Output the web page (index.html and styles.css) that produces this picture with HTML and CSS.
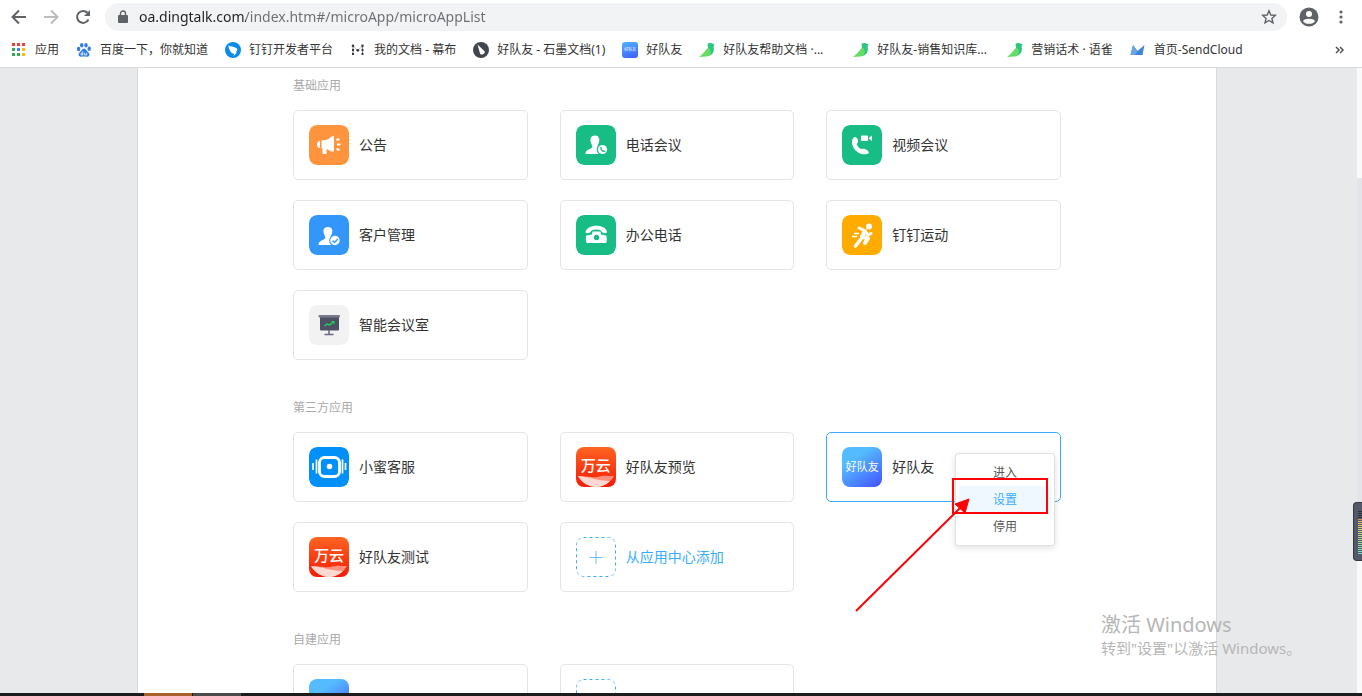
FILE: index.html
```
<!DOCTYPE html>
<html lang="zh-CN">
<head>
<meta charset="utf-8">
<title>应用管理</title>
<link rel="stylesheet" href="styles.css">
</head>
<body>
<header class="browser">
  <div class="toolbar">
    <button class="tool" aria-label="后退"><svg width="16" height="16" viewBox="0 0 16 16"><path d="M15 8H2M8 1.500L1.500 8L8 14.500" fill="none" stroke="#5f6368" stroke-width="2"/></svg></button>
    <button class="tool" aria-label="前进"><svg width="16" height="16" viewBox="0 0 16 16"><path d="M1 8H14M8 1.500L14.500 8L8 14.500" fill="none" stroke="#babcbe" stroke-width="2"/></svg></button>
    <button class="tool" aria-label="刷新"><svg width="16" height="16" viewBox="0 0 16 16"><path d="M13.500 10.500A6 6 0 1 1 12.500 3.800" fill="none" stroke="#5f6368" stroke-width="2"/><path d="M15 1V7H9Z" fill="#5f6368"/></svg></button>
    <div class="address">
      <svg width="12" height="14" viewBox="0 0 12 14"><rect x="1" y="5" width="10" height="8" rx="1" fill="#5f6368"/><path d="M3.500 6V3.500a2.500 2.500 0 0 1 5 0V6" fill="none" stroke="#5f6368" stroke-width="1.400"/></svg>
      <input class="url" type="text" aria-label="地址" value="oa.dingtalk.com/index.htm#/microApp/microAppList">
      <button class="tool" aria-label="收藏"><svg width="16" height="16" viewBox="0 0 16 16"><path d="M8 1.800L9.800 6L14.300 6.400L10.900 9.400L12 13.900L8 11.500L4 13.900L5.100 9.400L1.700 6.400L6.200 6Z" fill="none" stroke="#5f6368" stroke-width="1.400"/></svg></button>
    </div>
    <button class="tool" aria-label="用户"><svg width="20" height="20" viewBox="0 0 20 20"><circle cx="10" cy="10" r="9.500" fill="#5f6368"/><circle cx="10" cy="7" r="3" fill="#fff"/><path d="M4 14.200C5.500 11 14.500 11 16 14.200C14 17.600 6 17.600 4 14.200Z" fill="#fff"/></svg></button>
    <button class="tool more" aria-label="菜单"><svg width="4" height="16" viewBox="0 0 4 16" fill="#5f6368"><circle cx="2" cy="3" r="1.600"/><circle cx="2" cy="8" r="1.600"/><circle cx="2" cy="13" r="1.600"/></svg></button>
  </div>
  <nav class="bookmarks">
    <a href="#"><svg width="16" height="16" viewBox="0 0 16 16"><path d="M1 1h3v3H1zM6 1h3v3H6zM11 1h3v3h-3z" fill="#e8403a"/><path d="M1 6h3v3H1zM1 11h3v3H1z" fill="#34a853"/><path d="M6 6h3v3H6z" fill="#4285f4"/><path d="M11 6h3v3h-3zM11 11h3v3h-3z" fill="#fbbc05"/><path d="M6 11h3v3H6z" fill="#34a853"/></svg>应用</a>
    <a href="#"><svg width="16" height="16" viewBox="0 0 16 16" fill="#2f7de8"><ellipse cx="2.600" cy="7" rx="1.700" ry="2.200"/><ellipse cx="5.700" cy="3.300" rx="1.700" ry="2.200"/><ellipse cx="10" cy="3.300" rx="1.700" ry="2.200"/><ellipse cx="13.200" cy="6.800" rx="1.700" ry="2.200"/><path d="M8 6.500C10 6.500 10.500 9 12.500 10.500C14.500 12.500 13 15.200 10.500 14.800C8.500 14.400 7.500 14.400 5.500 14.800C2.500 15.200 1.800 12.300 3.500 10.600C5.500 9 6 6.500 8 6.500Z"/><path d="M6.800 9.500V13H5.200V11.200H6.500M8.600 10.800V13H10.700V10.800" fill="none" stroke="#fff" stroke-width=".8"/></svg>百度一下，你就知道</a>
    <a href="#"><svg width="16" height="16" viewBox="0 0 16 16"><circle cx="8" cy="8" r="8" fill="#0a8be8"/><path d="M3.500 3.500C6 4.500 10 5 12 6.500C13 7.500 11.500 9.500 10.700 10.500H12L8.500 14L9.200 11.500H8C6 11 5.500 9.800 5.300 9C4.300 7.500 3.500 5.500 3.500 3.500Z" fill="#fff"/></svg>钉钉开发者平台</a>
    <a href="#"><svg width="16" height="16" viewBox="0 0 16 16" fill="#33373d"><path d="M3 4L7.800 8.500L12.500 4" fill="none" stroke="#a0a3a7" stroke-width=".8"/><path d="M3 4V12M12.500 4V12" stroke="#777b80"/><circle cx="3" cy="3.800" r="1.300"/><circle cx="12.500" cy="3.800" r="1.300"/><circle cx="7.800" cy="8.300" r="1.400"/><path d="M2 7h2v2H2zM2 11h2v2H2zM11.500 7h2v2h-2zM11.500 11h2v2h-2z"/></svg>我的文档 - 幕布</a>
    <a href="#"><svg width="16" height="16" viewBox="0 0 16 16"><circle cx="8" cy="8" r="8" fill="#3f464e"/><path d="M4.500 2.500L11.800 9.500C12 12 9 13.500 7.200 12Z" fill="#fff"/></svg>好队友 - 石墨文档(1)</a>
    <a href="#"><span class="mini">好队友</span>好队友</a>
    <a href="#" class="long"><svg width="16" height="16" viewBox="0 0 16 16"><path d="M8.500 2C10.500 .5 12.500 1 15.500 2.500L14.500 4.500C16 10 13 13.500 8.500 14L9 6Z" fill="#2bc780"/><path d="M0 15C4.500 11.500 6.500 8 9.500 5.500C13 7.500 13 14.500 7 14.500Z" fill="#64dc66"/></svg>好队友帮助文档 ·...</a>
    <a href="#" class="long"><svg width="16" height="16" viewBox="0 0 16 16"><path d="M8.500 2C10.500 .5 12.500 1 15.500 2.500L14.500 4.500C16 10 13 13.500 8.500 14L9 6Z" fill="#2bc780"/><path d="M0 15C4.500 11.500 6.500 8 9.500 5.500C13 7.500 13 14.500 7 14.500Z" fill="#64dc66"/></svg>好队友-销售知识库...</a>
    <a href="#"><svg width="16" height="16" viewBox="0 0 16 16"><path d="M8.500 2C10.500 .5 12.500 1 15.500 2.500L14.500 4.500C16 10 13 13.500 8.500 14L9 6Z" fill="#2bc780"/><path d="M0 15C4.500 11.500 6.500 8 9.500 5.500C13 7.500 13 14.500 7 14.500Z" fill="#64dc66"/></svg>营销话术 · 语雀</a>
    <a href="#"><svg width="16" height="16" viewBox="0 0 16 16"><path d="M.5 13L3 3L7.500 9L14.500 3L12.500 13Z" fill="#3f86d8"/><path d="M3 3L7.500 9L5 13H.5Z" fill="#6aa5e6"/></svg>首页-SendCloud</a>
    <button class="tool overflow" aria-label="更多书签"><svg width="10" height="8" viewBox="0 0 10 8"><path d="M1 1L4 4L1 7M5 1L8 4L5 7" fill="none" stroke="#50545a" stroke-width="1.500"/></svg></button>
  </nav>
</header>

<div class="viewport">
  <main class="sheet">
    <section class="group">
      <h2>基础应用</h2>
      <ul class="cards">
        <li class="card"><a href="#"><svg class="icon" viewBox="0 0 40 40"><rect width="40" height="40" rx="8" fill="#ff943e"/><g fill="#fff"><path d="M11 16V23C7 23.500 7 15.500 11 16Z"/><path d="M12.500 15.500C17 15.500 20 14 22.500 11.500L25 11V26.500L22.500 26.500L17.500 24V29H13.500V23.500H12.500Z"/><path d="M27.500 15L30.500 14M28 19.500H31.500M27.500 24L30.500 25" stroke="#fff" stroke-width="2"/></g></svg>公告</a></li>
        <li class="card"><a href="#"><svg class="icon" viewBox="0 0 40 40"><rect width="40" height="40" rx="8" fill="#17bd84"/><path d="M19 10.500C23 10.500 24 14 23 17.500C22 20 21 21 22 22.500L26 24.500V29H9.500C9.500 25.500 12 25 15.500 23C17 22 16 20.500 15 18C13.500 14 15 10.500 19 10.500Z" fill="#fff"/><circle cx="26.500" cy="24.500" r="5.800" fill="#17bd84"/><circle cx="26.500" cy="24.500" r="4.600" fill="#fff"/><path d="M25 22C24.500 25 26.500 27 29 26" fill="none" stroke="#17bd84" stroke-width="1.400"/></svg>电话会议</a></li>
        <li class="card"><a href="#"><svg class="icon" viewBox="0 0 40 40"><rect width="40" height="40" rx="8" fill="#17bd84"/><path d="M12.500 12C15.500 11.500 17.500 17.500 15 18.500C14 20 18 24.500 20 24C22 23 27 25.500 27 28C22 32 9 27 10 15.500Q10.500 13 12.500 12Z" fill="#fff"/><rect x="19" y="10.500" width="7" height="5.500" rx="1" fill="#fff"/><path d="M26.500 13.200L30 10.500V16Z" fill="#fff"/></svg>视频会议</a></li>
        <li class="card"><a href="#"><svg class="icon" viewBox="0 0 40 40"><rect width="40" height="40" rx="8" fill="#3296fa"/><path d="M19 12C23 12 24 15 23 18.500C22 21 21 21.500 22 23L26 25V30H9.500C9.500 26.500 12 26 15.500 24C17 23 16 21.500 15 19C13.500 15 15 12 19 12Z" fill="#fff"/><circle cx="26" cy="25.500" r="5.800" fill="#3296fa"/><circle cx="26" cy="25.500" r="4.700" fill="#fff"/><path d="M23.500 25.500L25.500 27.500L28.800 24" fill="none" stroke="#3296fa" stroke-width="1.300"/></svg>客户管理</a></li>
        <li class="card"><a href="#"><svg class="icon" viewBox="0 0 40 40"><rect width="40" height="40" rx="8" fill="#17bd84"/><path d="M9.500 17.500C10 8.500 31 8.500 31 17.500C29 19 26 18 25 15.500C22 14.300 18 14.300 15.500 15.500C14.500 18 11.500 19 9.500 17.500Z" fill="#fff"/><path d="M16.500 16.500H24.500L25 19.500L30 20.500C31 21 31 27 30 28H11C9.500 27 9.500 21 10.500 20.500L16 19.500Z" fill="#fff"/><circle cx="20.500" cy="22.500" r="2.700" fill="#17bd84"/></svg>办公电话</a></li>
        <li class="card"><a href="#"><svg class="icon" viewBox="0 0 40 40"><rect width="40" height="40" rx="8" fill="#ffab00"/><circle cx="27" cy="11.500" r="3" fill="#fff"/><path d="M17 13L22.500 15.500L26 20L29 18.500" fill="none" stroke="#fff" stroke-width="3" stroke-linecap="round" stroke-linejoin="round"/><path d="M23 16L20 21.500L26 23.500L23 28" fill="none" stroke="#fff" stroke-width="4" stroke-linecap="round" stroke-linejoin="round"/><path d="M19 24L13.500 31" stroke="#fff" stroke-width="3.500" stroke-linecap="round"/><path d="M12 18.500H17M10 21.500H15" stroke="#fff" stroke-width="1.400"/></svg>钉钉运动</a></li>
        <li class="card"><a href="#"><svg class="icon" viewBox="0 0 40 40"><rect width="40" height="40" rx="8" fill="#f2f2f2"/><rect x="11" y="11" width="19" height="14.500" rx="1" fill="#4e5064"/><rect x="9.500" y="10" width="21.500" height="2.500" rx="1" fill="#797a8c"/><path d="M20 25V29M15.500 29.500H24.500" stroke="#6a6b80" stroke-width="1.600"/><path d="M15.500 21L18 19L20.500 20L23.500 17.500" fill="none" stroke="#1fd45e" stroke-width="1.500"/><path d="M22 16H25.500V19.500Z" fill="#1fd45e"/></svg>智能会议室</a></li>
      </ul>
    </section>

    <section class="group">
      <h2>第三方应用</h2>
      <ul class="cards">
        <li class="card"><a href="#"><svg class="icon" viewBox="0 0 40 40"><rect width="40" height="40" rx="8" fill="#0190fa"/><rect x="10.500" y="10.500" width="20" height="19" rx="5" fill="none" stroke="#fff" stroke-width="2.800"/><circle cx="20.500" cy="19.500" r="2.800" fill="#fff"/><path d="M7.500 12.500V26.500M4 16V23M33.500 12.500V26.500M36.500 16V23" stroke="#fff" stroke-width="1.700"/></svg>小蜜客服</a></li>
        <li class="card"><a href="#"><span class="icon wan"><span>万云</span><svg viewBox="0 0 40 12"><path d="M2 1C12 1 17 3 21 2C27 0 33 1 38 1C34 8 27 12 20 12C13 12 6 8 2 1Z" fill="#ff8f7c"/><path d="M2 1C14 2 23 6 34 6C30 10 25 12 20 12C13 12 6 8 2 1Z" fill="#ffd8d2"/></svg></span>好队友预览</a></li>
        <li class="card active"><a href="#"><span class="icon team">好队友</span>好队友</a>
          <div class="menu"><button>进入</button><button class="chosen">设置</button><button>停用</button></div>
          <svg class="marker" width="194" height="138" viewBox="0 0 194 138"><rect x="99" y="3" width="94" height="34" fill="none" stroke="#fb0307" stroke-width="2"/><path d="M2 135L106 32" stroke="#fb0307" stroke-width="2"/><path d="M115 23L101 28L111 37Z" fill="#fb0307" stroke="#fb0307"/></svg>
        </li>
        <li class="card"><a href="#"><span class="icon wan"><span>万云</span><svg viewBox="0 0 40 12"><path d="M2 1C12 1 17 3 21 2C27 0 33 1 38 1C34 8 27 12 20 12C13 12 6 8 2 1Z" fill="#ff8f7c"/><path d="M2 1C14 2 23 6 34 6C30 10 25 12 20 12C13 12 6 8 2 1Z" fill="#ffd8d2"/></svg></span>好队友测试</a></li>
        <li class="card add"><a href="#"><svg class="icon" viewBox="0 0 40 40"><rect x=".5" y=".5" width="39" height="39" rx="7" fill="none" stroke="#38adff" stroke-dasharray="3 3"/><path d="M13.500 20.500H26.500M20 14V27" stroke="#6fbdf8"/></svg>从应用中心添加</a></li>
      </ul>
    </section>

    <section class="group">
      <h2>自建应用</h2>
      <ul class="cards">
        <li class="card"><a href="#" aria-label="自建应用"><span class="icon team">好队友</span></a></li>
        <li class="card add"><a href="#" aria-label="添加应用"><svg class="icon" viewBox="0 0 40 40"><rect x=".5" y=".5" width="39" height="39" rx="7" fill="none" stroke="#38adff" stroke-dasharray="3 3"/><path d="M13.500 20.500H26.500M20 14V27" stroke="#6fbdf8"/></svg></a></li>
      </ul>
    </section>
  </main>
  <div class="track"><div class="thumb"></div></div>
  <div class="meter"><div class="levels"></div></div>
  <div class="watermark"><p class="big">激活 Windows</p><p>转到"设置"以激活 Windows。</p></div>
</div>
<footer class="taskbar"><span class="task hot"></span><span class="task"></span></footer>
</body>
</html>
```
FILE: styles.css
```
* { box-sizing: border-box; }
body {
  margin: 0;
  height: 100vh;
  display: flex;
  flex-direction: column;
  overflow: hidden;
  background: #fff;
  color: #333;
  font: 12px/20px "Noto Sans", "Noto Sans CJK SC", sans-serif;
}
h2, p, ul { margin: 0; padding: 0; font-weight: 400; }
ul { list-style: none; }
a { color: inherit; text-decoration: none; }
button { border: 0; padding: 0; background: none; font: inherit; color: inherit; cursor: pointer; }

.browser { flex: none; border-bottom: 1px solid #d9dadc; }
.toolbar { display: flex; align-items: center; gap: 16px; height: 34px; padding: 0 19px 0 11px; }
.tool { display: flex; flex: none; }
.address {
  flex: 1;
  display: flex;
  align-items: center;
  gap: 10px;
  height: 28px;
  margin-right: -4px;
  margin-left: -2px;
  padding: 0 10px 0 12px;
  border-radius: 14px;
  background: #f1f3f4;
}
.url {
  flex: 1;
  min-width: 0;
  border: 0;
  padding: 0;
  font: 14px/20px "Noto Sans", sans-serif;
  color: #6b6e72;
  background: linear-gradient(90deg, #202124 107px, #6b6e72 107px);
  -webkit-background-clip: text;
  background-clip: text;
  -webkit-text-fill-color: transparent;
}
.more { margin-left: 4px; }
.bookmarks { display: flex; align-items: center; gap: 17px; height: 33px; padding: 0 17px 1px 11px; }
.bookmarks a { display: flex; align-items: center; gap: 8px; flex: none; white-space: nowrap; }
.bookmarks .long { min-width: 137px; }
.overflow { margin-left: auto; }
.mini {
  width: 16px;
  height: 16px;
  border-radius: 3px;
  background: linear-gradient(160deg, #52b5fd, #3d5cff);
  color: #fff;
  font-size: 4px;
  line-height: 16px;
  text-align: center;
}

.viewport { position: relative; flex: 1; min-height: 0; display: flex; overflow: hidden; background: #e8e9eb; }
.sheet {
  width: 100%;
  max-width: 1080px;
  height: max-content;
  margin: 0 auto;
  padding-top: 8px;
  border: solid #d9dadc;
  border-width: 0 1px;
  background: #fff;
}
.group { max-width: 768px; margin: 0 auto 38px; }
.group h2 { margin-bottom: 14px; font-size: 12px; color: #aaa; }
.cards { display: grid; grid-template-columns: repeat(3, 1fr); gap: 20px 32px; }
.card { position: relative; border: 1px solid #e4e4e4; border-radius: 5px; font-size: 14px; }
.card a { display: flex; align-items: center; gap: 10px; padding: 14px 15px; }
.card.active { border-color: #38adff; }
.add { color: #38adff; }
.icon { flex: none; width: 40px; height: 40px; border-radius: 8px; overflow: hidden; }
.team {
  background: linear-gradient(145deg, #55bbff 30%, #4050ff);
  color: #fff;
  font-size: 11px;
  line-height: 40px;
  text-align: center;
  white-space: nowrap;
}
.wan {
  display: flex;
  flex-direction: column;
  justify-content: space-between;
  padding-top: 8px;
  background: linear-gradient(#ff6422, #f41b05);
  color: #fff;
  font-size: 15px;
  font-weight: 500;
  text-align: center;
}

.menu {
  position: absolute;
  top: 20px;
  right: 5px;
  width: 100px;
  display: flex;
  flex-direction: column;
  padding: 5px 3px;
  border: 1px solid #e0e0e0;
  border-radius: 3px;
  background: #fff;
  box-shadow: 0 2px 6px rgba(0, 0, 0, .12);
  color: #595959;
  font-size: 12px;
}
.menu button { height: 27px; }
.menu .chosen { background: #f0f8ff; color: #38adff; }
.marker { position: absolute; top: 43px; left: 27px; pointer-events: none; }

.track { width: 5px; flex: none; margin-left: -5px; padding-top: 110px; background: #fafafa; }
.viewport { padding-right: 8px; }
.track { position: absolute; top: 0; right: 0; bottom: 0; }
.thumb { height: 380px; background: #e4e5ea; }
.meter {
  position: absolute;
  right: 0;
  top: 434px;
  width: 9px;
  height: 59px;
  padding: 7px 0 6px 4px;
  border: 1px solid #343842;
  border-right: 0;
  border-radius: 4px 0 0 4px;
  background: #535968;
}
.levels {
  height: 100%;
  background:
    repeating-linear-gradient(#535968 0 1px, transparent 1px 2px),
    linear-gradient(#2c303a 20%, #f0b060 22%, #d8dc80 45%, #a0dc90 70%, #70dcd0);
}
.watermark { position: absolute; right: 59px; bottom: 34px; width: 202px; color: #b6b6b6; font-size: 15px; line-height: 22px; white-space: nowrap; }
.watermark .big { font-size: 20px; line-height: 24px; }

.taskbar { flex: none; display: flex; gap: 1px; height: 3px; padding-left: 144px; background: #1c1c1e; }
.task { width: 48px; background: #4c4c4e; }
.hot { background: #a8622c; }
```
